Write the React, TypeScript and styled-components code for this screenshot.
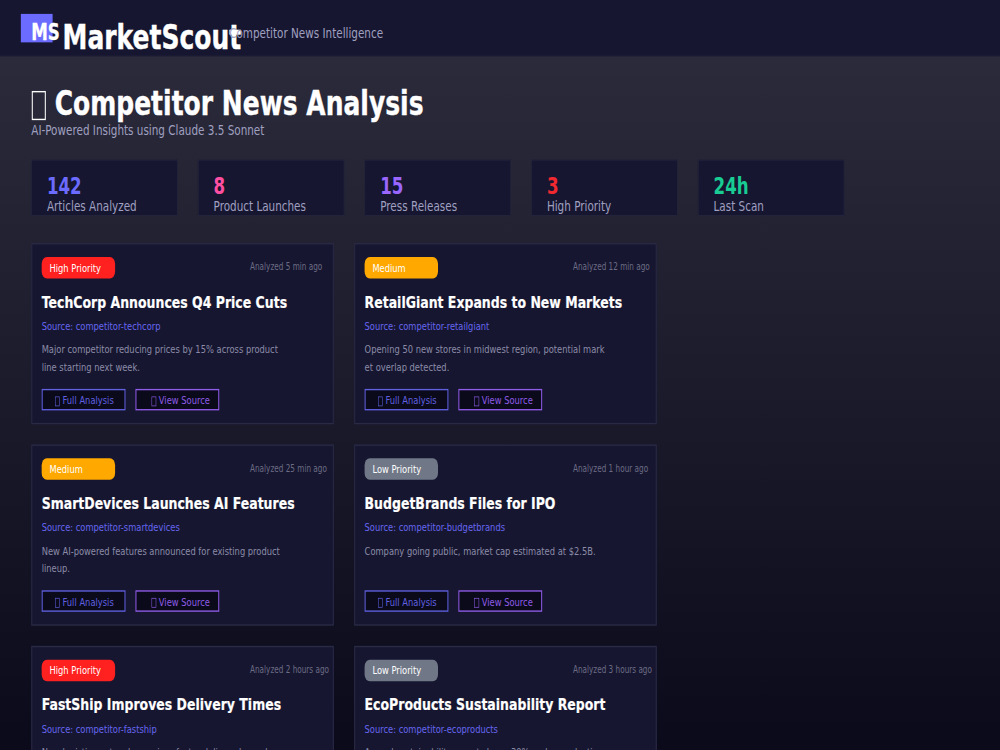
import React from "react";
import styled, { createGlobalStyle } from "styled-components";

const GlobalStyle = createGlobalStyle`
  *, *::before, *::after { box-sizing: border-box; }
  html, body { margin: 0; background: #0a0a1a; overflow: hidden; }
  body { font-family: "DejaVu Sans", sans-serif; }
`;

/* The dashboard is authored on a 1920x1080 board and fitted to the 1000x750 viewport. */
const Viewport = styled.div`
  width: 1000px;
  height: 750px;
  overflow: hidden;
`;

const Board = styled.div`
  width: 1920px;
  height: 1080px;
  overflow: hidden;
  transform: scale(0.5208333, 0.6944444);
  transform-origin: 0 0;
  background: linear-gradient(180deg, #2d2d3d 0%, #0a0a1a 100%);
  color: #fff;
  white-space: nowrap;
`;

const Header = styled.header`
  display: flex;
  align-items: flex-start;
  height: 81px;
  padding: 20px 40px 0;
  background: #161630;
  border-bottom: 1px solid #202038;
`;

const Logo = styled.div`
  flex: none;
  width: 61px;
  height: 41px;
  padding: 8px 0 0 20px;
  background: #6b6bff;
  font-size: 32px;
  font-weight: 700;
  line-height: 38px;
  -webkit-text-stroke: 0.5px currentColor;
`;

const Brand = styled.div`
  flex: none;
  width: 320px;
  margin: 5px 0 0 19px;
  font-size: 48px;
  font-weight: 700;
  line-height: 56px;
  -webkit-text-stroke: 0.6px currentColor;
`;

const Tagline = styled.div`
  margin-top: 16px;
  color: #a0a0c0;
  font-size: 20px;
  line-height: 23px;
`;

const Main = styled.main`
  padding: 39px 60px 0;
`;

const Heading = styled.h1`
  display: flex;
  margin: 0;
  font-size: 48px;
  font-weight: 700;
  line-height: 56px;
  -webkit-text-stroke: 0.6px currentColor;
`;

const HeadingMark = styled.span`
  width: 27px;
  height: 42px;
  margin: 11px 17px 0 1px;
  border: 2px solid #fff;
`;

const Subheading = styled.p`
  margin: 0;
  color: #a0a0c0;
  font-size: 20px;
  line-height: 23px;
`;

const Stats = styled.section`
  display: flex;
  gap: 39px;
  margin-top: 31px;
`;

const Stat = styled.div`
  width: 281px;
  height: 81px;
  padding: 20px 29px 0;
  background: #161630;
  border: 1px solid #2a2a40;
`;

const StatValue = styled.div<{ $color: string }>`
  color: ${(p) => p.$color};
  font-size: 32px;
  font-weight: 700;
  line-height: 37px;
`;

const StatLabel = styled.div`
  margin-top: -2px;
  color: #a0a0c0;
  font-size: 20px;
  line-height: 23px;
`;

const Grid = styled.section`
  display: grid;
  grid-template-columns: 581px 581px;
  gap: 29px 39px;
  margin-top: 39px;
`;

const Card = styled.article`
  height: 261px;
  padding: 18px 0 0 18px;
  background: #161630;
  border: 2px solid #2a2a45;
`;

const CardTop = styled.div`
  display: flex;
  height: 31px;
`;

const Badge = styled.span<{ $color: string }>`
  width: 141px;
  height: 31px;
  padding: 6px 0 0 15px;
  border-radius: 10px;
  background: ${(p) => p.$color};
  font-size: 16px;
  line-height: 19px;
`;

const Time = styled.span`
  margin: 6px 0 0 259px;
  color: #6c6c84;
  font-size: 14px;
  line-height: 17px;
`;

const CardTitle = styled.h2`
  margin: 20px 0 0;
  font-size: 24px;
  font-weight: 700;
  line-height: 28px;
  -webkit-text-stroke: 0.3px currentColor;
`;

const Source = styled.div`
  margin-top: 11px;
  color: #6666f0;
  font-size: 16px;
  line-height: 19px;
`;

const Summary = styled.p`
  height: 50px;
  margin: 12px 0 0;
  color: #8c8ca8;
  font-size: 16px;
  line-height: 25px;
`;

const Actions = styled.div`
  display: flex;
  gap: 19px;
  margin-top: 19px;
`;

const Action = styled.button<{ $color: string; $inset: number }>`
  display: flex;
  width: 161px;
  height: 31px;
  padding: 5px 0 0 ${(p) => p.$inset - 2}px;
  background: #0a0a1a;
  border: 2px solid ${(p) => p.$color};
  color: ${(p) => p.$color};
  font: 16px/19px "DejaVu Sans", sans-serif;
  white-space: nowrap;
`;

const ActionMark = styled.span`
  width: 9px;
  height: 14px;
  margin: 4px 5px 0 1px;
  border: 1px solid currentColor;
`;

const STATS = [
  { value: "142", label: "Articles Analyzed", color: "#6b6bff" },
  { value: "8", label: "Product Launches", color: "#ff4fa3" },
  { value: "15", label: "Press Releases", color: "#9966ff" },
  { value: "3", label: "High Priority", color: "#f02830" },
  { value: "24h", label: "Last Scan", color: "#18cc94" },
];

const LEVELS = {
  high: { label: "High Priority", color: "#ff2020" },
  medium: { label: "Medium", color: "#ffa800" },
  low: { label: "Low Priority", color: "#707888" },
};

type Article = {
  level: keyof typeof LEVELS;
  time: string;
  title: string;
  source: string;
  lines: string[];
};

const ARTICLES: Article[] = [
  { level: "high", time: "5 min ago", title: "TechCorp Announces Q4 Price Cuts", source: "techcorp", lines: ["Major competitor reducing prices by 15% across product", "line starting next week."] },
  { level: "medium", time: "12 min ago", title: "RetailGiant Expands to New Markets", source: "retailgiant", lines: ["Opening 50 new stores in midwest region, potential mark", "et overlap detected."] },
  { level: "medium", time: "25 min ago", title: "SmartDevices Launches AI Features", source: "smartdevices", lines: ["New AI-powered features announced for existing product", "lineup."] },
  { level: "low", time: "1 hour ago", title: "BudgetBrands Files for IPO", source: "budgetbrands", lines: ["Company going public, market cap estimated at $2.5B."] },
  { level: "high", time: "2 hours ago", title: "FastShip Improves Delivery Times", source: "fastship", lines: ["New logistics network promises faster delivery by end"] },
  { level: "low", time: "3 hours ago", title: "EcoProducts Sustainability Report", source: "ecoproducts", lines: ["Annual sustainability report shows 30% carbon reduction"] },
];

function ArticleCard({ article }: { article: Article }) {
  const level = LEVELS[article.level];
  return (
    <Card>
      <CardTop>
        <Badge $color={level.color}>{level.label}</Badge>
        <Time>Analyzed {article.time}</Time>
      </CardTop>
      <CardTitle>{article.title}</CardTitle>
      <Source>Source: competitor-{article.source}</Source>
      <Summary>
        {article.lines.map((line, i) => (
          <React.Fragment key={line}>
            {i > 0 && <br />}
            {line}
          </React.Fragment>
        ))}
      </Summary>
      <Actions>
        <Action $color="#6060e0" $inset={25}><ActionMark />Full Analysis</Action>
        <Action $color="#8f5ce8" $inset={30}><ActionMark />View Source</Action>
      </Actions>
    </Card>
  );
}

export default function App() {
  return (
    <Viewport>
      <GlobalStyle />
      <Board>
        <Header>
          <Logo>MS</Logo>
          <Brand>MarketScout</Brand>
          <Tagline>Competitor News Intelligence</Tagline>
        </Header>
        <Main>
          <Heading><HeadingMark />Competitor News Analysis</Heading>
          <Subheading>AI-Powered Insights using Claude 3.5 Sonnet</Subheading>
          <Stats>
            {STATS.map((s) => (
              <Stat key={s.label}>
                <StatValue $color={s.color}>{s.value}</StatValue>
                <StatLabel>{s.label}</StatLabel>
              </Stat>
            ))}
          </Stats>
          <Grid>
            {ARTICLES.map((a) => <ArticleCard key={a.title} article={a} />)}
          </Grid>
        </Main>
      </Board>
    </Viewport>
  );
}
